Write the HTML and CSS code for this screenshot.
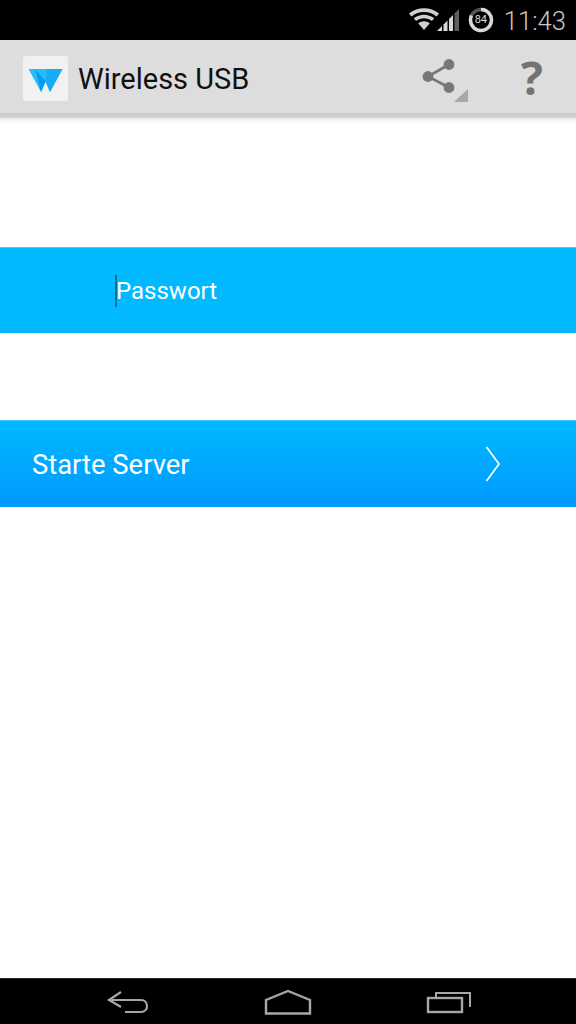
FILE: index.html
```html
<!DOCTYPE html>
<html lang="de">
<head>
<meta charset="utf-8">
<title>Wireless USB</title>
<link rel="stylesheet" href="styles.css">
</head>
<body>
<div class="screen">
  <div class="status">
    <svg class="wifi" width="32" height="24" viewBox="0 0 32 24">
      <path d="M1 7.500C9.500 0.500 22.500 0.500 31 7.500L28.600 10.400C21.500 4.600 10.500 4.600 3.400 10.400Z" fill="#d0d0d0"/>
      <path d="M5.800 12.300C11.800 7.500 20.200 7.500 26.200 12.300L23.900 15C19.300 11.300 12.700 11.300 8.100 15Z" fill="#d0d0d0"/>
      <path d="M10.200 17.200C13.700 14.500 18.300 14.500 21.800 17.200L16 24Z" fill="#d0d0d0"/>
    </svg>
    <svg class="signal" width="23" height="24" viewBox="0 0 23 24">
      <path d="M0 24L5 19V24Z" fill="#d8d8d8"/>
      <path d="M6.500 17.500L10.500 13.500V24H6.500Z" fill="#d8d8d8"/>
      <path d="M12 12L16 8V24H12Z" fill="#d8d8d8"/>
      <path d="M17.500 6.500L22 2V24H17.500Z" fill="#5e5e5e"/>
    </svg>
    <span class="battery">
      <svg width="26" height="26" viewBox="0 0 26 26">
        <circle cx="13" cy="13" r="10.500" fill="none" stroke="#555" stroke-width="3.400"/>
        <path d="M13 2.500A10.500 10.500 0 1 1 3.500 8.500" fill="none" stroke="#d8d8d8" stroke-width="3.400"/>
      </svg>
      <span class="battery-num">84</span>
    </span>
    <span class="clock">11:43</span>
  </div>

  <header class="appbar">
    <div class="logo">
      <svg width="37" height="25" viewBox="0 0 40 28">
        <path d="M1 1H39L25 27L20 15L15 27Z" fill="#23bdf9"/>
        <path d="M22 1H39L25 27L20 15Z" fill="#14adf6"/>
        <path d="M8.500 1L20 15L15 27Z" fill="#0b97ef"/>
      </svg>
    </div>
    <h1 class="title">Wireless USB</h1>
    <div class="actions">
      <span class="share">
        <svg width="34" height="36" viewBox="0 0 34 36">
          <path d="M27 6.500L6 18.500L27 29.500" fill="none" stroke="#777" stroke-width="2.600"/>
          <circle cx="27" cy="6.500" r="5.400" fill="#777"/>
          <circle cx="6" cy="18.500" r="5.400" fill="#777"/>
          <circle cx="27" cy="29.500" r="5.400" fill="#777"/>
        </svg>
        <i class="corner"></i>
      </span>
      <span class="help">?</span>
    </div>
  </header>
  <div class="shadow"></div>

  <main class="content">
    <div class="band field">
      <i class="caret"></i><span>Passwort</span>
    </div>
    <button class="band start" type="button">
      <span>Starte Server</span>
      <svg width="16" height="36" viewBox="0 0 16 36">
        <path d="M1.500 1L14 18L1.500 35" fill="none" stroke="#fff" stroke-width="1.700"/>
      </svg>
    </button>
  </main>

  <nav class="navbar">
    <svg width="44" height="24" viewBox="0 0 44 24">
      <path d="M15 2L3 10L15 17M3 10H35C43 10 43 22 35 22H19" fill="none" stroke="#a6a6a6" stroke-width="2.200"/>
    </svg>
    <svg width="48" height="26" viewBox="0 0 48 26">
      <path d="M2 24.500V11L24 2L46 11V24.500Z" fill="none" stroke="#a6a6a6" stroke-width="2.400"/>
    </svg>
    <svg width="46" height="24" viewBox="0 0 46 24">
      <path d="M10 7V3H44V17" fill="none" stroke="#a6a6a6" stroke-width="2"/>
      <rect x="2" y="8" width="34" height="14" fill="none" stroke="#a6a6a6" stroke-width="2.400"/>
    </svg>
  </nav>
</div>
</body>
</html>
```

FILE: styles.css
```css
html, body {
  margin: 0;
  padding: 0;
}

.screen {
  width: 576px;
  height: 1024px;
  display: flex;
  flex-direction: column;
  background: #fff;
  font-family: Roboto, "Liberation Sans", sans-serif;
  overflow: hidden;
}

.status {
  height: 40px;
  flex: none;
  background: #000;
  display: flex;
  align-items: center;
  justify-content: flex-end;
  padding-right: 10px;
  box-sizing: border-box;
}

.wifi { margin-top: -4px; }
.signal { margin-left: -3px; margin-top: -2px; }

.battery {
  position: relative;
  width: 26px;
  height: 26px;
  margin-left: 8px;
  margin-right: 10px;
  display: block;
}

.battery svg { display: block; }

.battery-num {
  position: absolute;
  inset: 0;
  text-align: center;
  line-height: 26px;
  font-size: 11px;
  color: #d8d8d8;
}

.clock {
  color: #c8c8c8;
  font-size: 25.6px;
  font-weight: 300;
  line-height: 40px;
  margin-top: 1px;
}

.appbar {
  height: 73px;
  flex: none;
  background: #dddddd;
  display: flex;
  align-items: center;
  padding: 4px 0 0 23px;
  box-sizing: border-box;
}

.logo {
  width: 45px;
  height: 45px;
  border-radius: 3px;
  background: #f1f1f1;
  display: flex;
  align-items: center;
  justify-content: center;
  flex: none;
}

.logo svg { display: block; margin-top: 4px; }

.title {
  margin: 0 0 0 10px;
  font-size: 29px;
  font-weight: 400;
  color: #111;
  white-space: nowrap;
}

.actions {
  margin-left: auto;
  display: flex;
  align-items: center;
}

.share {
  position: relative;
  display: block;
  width: 34px;
  height: 36px;
  margin-right: 64px;
  margin-top: -5px;
}

.share svg { display: block; }

.corner {
  position: absolute;
  left: 32px;
  top: 31px;
  width: 0;
  height: 0;
  border-style: solid;
  border-width: 0 0 13px 14px;
  border-color: transparent transparent #a8a8a8 transparent;
}

.help {
  width: 24px;
  margin-right: 32px;
  font-family: "Open Sans", "Liberation Sans", sans-serif;
  font-size: 46px;
  line-height: 40px;
  font-weight: 700;
  color: #737373;
  text-align: center;
  margin-top: -4px;
}

.shadow {
  height: 12px;
  flex: none;
  margin-bottom: -12px;
  position: relative;
  background: linear-gradient(#c8c8c8 0, #d0d0d0 4px, #f0f0f0 6px, #fafafa 9px, #fff 12px);
}

.content {
  flex: 1;
  padding-top: 134px;
  display: flex;
  flex-direction: column;
  gap: 87px;
}

.band {
  height: 86px;
  flex: none;
  width: 100%;
  border: 0;
  margin: 0;
  box-sizing: border-box;
  display: flex;
  align-items: center;
  color: #fff;
  font-family: inherit;
}

.field {
  background: #00b9ff;
  border-top: 1px solid #45ccff;
  padding-left: 115px;
  font-size: 24px;
  font-weight: 400;
}

.caret {
  width: 2px;
  height: 32px;
  background: #0a6f9c;
  margin-right: -1px;
  flex: none;
}

.start {
  height: 87px;
  background: linear-gradient(#00b9ff, #0099ff);
  border-top: 1px solid #45ccff;
  padding: 2px 75px 0 32px;
  font-size: 27.4px;
  justify-content: space-between;
}

.start svg { margin-top: -2px; }

.navbar {
  height: 46px;
  flex: none;
  background: #000;
  display: flex;
  align-items: center;
  justify-content: space-between;
  padding: 0 104px 0 106px;
  box-sizing: border-box;
  border-top: 1px solid #2a2a2a;
}

.navbar svg { display: block; }
```
